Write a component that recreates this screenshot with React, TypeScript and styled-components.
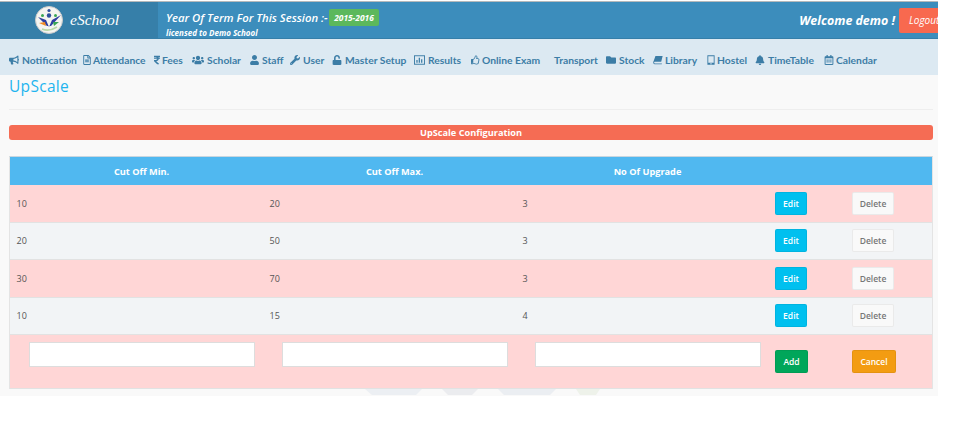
import React from 'react';
import styled, { createGlobalStyle } from 'styled-components';
import {
  FaBullhorn,
  FaRegFileAlt,
  FaRupeeSign,
  FaUsers,
  FaUser,
  FaWrench,
  FaUnlock,
  FaRegThumbsUp,
  FaFolder,
  FaBell,
  FaRegCalendarAlt,
} from 'react-icons/fa';

const GlobalStyle = createGlobalStyle`
  html, body {
    margin: 0;
    padding: 0;
    background: #ffffff;
    font-family: 'Open Sans', 'Liberation Sans', sans-serif;
  }
`;

const Page = styled.div`
  position: relative;
  width: 960px;
  height: 433px;
  overflow: hidden;
`;

const Frame = styled.div`
  width: 938px;
  overflow: hidden;
`;

const Header = styled.header`
  display: flex;
  height: 36px;
  margin-top: 1px;
  border-top: 1px solid #b5b9bb;
  border-bottom: 1px solid #367fa9;
  background: #3c8dbc;
  color: #ffffff;
`;

const Brand = styled.div`
  display: flex;
  align-items: center;
  width: 158px;
  padding-left: 35px;
  gap: 7px;
  box-sizing: border-box;
  background: #367fa9;
`;

const BrandName = styled.span`
  font-family: 'Liberation Serif', serif;
  font-style: italic;
  font-size: 15.5px;
`;

const Session = styled.div`
  flex: 1;
  padding: 7px 0 0 8px;
  font-style: italic;
  font-weight: 600;
`;

const SessionTitle = styled.div`
  display: flex;
  align-items: center;
  font-size: 11.3px;
  line-height: 17px;
`;

const YearBadge = styled.span`
  margin-left: 1px;
  padding: 0 5.5px;
  height: 17px;
  line-height: 18px;
  font-size: 8.4px;
  font-weight: 700;
  background: #5cb85c;
  border-radius: 2px;
`;

const Licence = styled.div`
  font-size: 8px;
  font-weight: 700;
  line-height: 11px;
  margin-top: 1px;
`;

const UserArea = styled.div`
  display: flex;
  align-items: center;
  height: 36px;
  margin-right: -12px;
`;

const Welcome = styled.span`
  font-size: 12.4px;
  font-style: italic;
  font-weight: 700;
  margin-right: 4px;
`;

const Logout = styled.span`
  display: block;
  width: 41px;
  height: 25px;
  padding-left: 10px;
  line-height: 25px;
  font-size: 10px;
  font-style: italic;
  background: #f8694f;
  border-radius: 2px;
`;

const Nav = styled.nav`
  display: flex;
  align-items: center;
  height: 36px;
  padding: 6px 0 0 9px;
  box-sizing: border-box;
  background: #dce9f2;
  color: #3c7da6;
  font-family: Lato, 'Liberation Sans', sans-serif;
  font-size: 10.3px;
  font-weight: 700;
  white-space: nowrap;
`;

const NavItem = styled.span<{ $width: number; $iconWidth: number; $gap: number }>`
  display: inline-flex;
  align-items: center;
  gap: ${(props) => props.$gap}px;
  width: ${(props) => props.$width}px;
  flex: none;

  svg {
    width: ${(props) => props.$iconWidth}px;
    height: 10px;
    flex: none;
  }
`;

const Content = styled.main`
  height: 321px;
  padding: 0 5px 0 9px;
  background: #f9f9f9;
`;

const Title = styled.h1`
  margin: 0;
  padding-top: 1px;
  height: 35px;
  box-sizing: border-box;
  border-bottom: 1px solid #eeeeee;
  font-size: 15.5px;
  font-weight: 400;
  line-height: 20px;
  letter-spacing: 0.3px;
  color: #1fb5ef;
`;

const ConfigBar = styled.div`
  height: 15px;
  margin: 15px 0 16px;
  line-height: 15px;
  text-align: center;
  font-size: 9.2px;
  font-weight: 700;
  color: #ffffff;
  background: #f56c54;
  border-radius: 3px;
`;

const Table = styled.div`
  border-top: 1px solid #c9d6df;
  border-left: 1px solid #e4e4e4;
  border-right: 1px solid #e4e4e4;
`;

const columns = '253px 253px 253px 77px 1fr';

const HeadRow = styled.div`
  display: grid;
  grid-template-columns: ${columns};
  height: 28px;
  background: #50b8f0;
  color: #ffffff;
  font-size: 9.2px;
  font-weight: 700;
`;

const HeadCell = styled.div`
  display: flex;
  align-items: center;
  justify-content: center;
  padding-left: 10px;
`;

const Row = styled.div<{ $odd: boolean; $tall?: boolean }>`
  display: grid;
  grid-template-columns: ${columns};
  height: ${(props) => (props.$tall ? 54 : 37.5)}px;
  box-sizing: border-box;
  align-items: center;
  background: ${(props) => (props.$odd ? '#ffd6d6' : '#f2f4f6')};
  border-bottom: 1px solid #e2e2e2;
  font-size: 9px;
  color: #555555;
`;

const Cell = styled.div`
  padding-left: 6.5px;
`;

const InputCell = styled.div`
  padding: 0 0 14px 19px;
`;

const TextBox = styled.input`
  display: block;
  width: 226px;
  height: 25px;
  box-sizing: border-box;
  border: 1px solid #dddddd;
  background: #ffffff;
  padding: 0;
`;

const ButtonCell = styled.div`
  padding-left: 6px;
`;

const Button = styled.button<{ $color: string; $text: string; $width: number }>`
  display: block;
  width: ${(props) => props.$width}px;
  height: 23px;
  padding: 0;
  font-family: inherit;
  font-size: 8.5px;
  font-weight: 600;
  color: ${(props) => props.$text};
  background: ${(props) => props.$color};
  border: 1px solid rgba(0, 0, 0, 0.06);
  border-radius: 2px;
`;

const Watermark = styled.svg`
  position: absolute;
  left: 360px;
  top: 389px;
`;

const ResultsIcon = () => (
  <svg viewBox="0 0 14 12">
    <rect x="0.6" y="0.6" width="12.8" height="10.8" fill="none" stroke="currentColor" strokeWidth="1.2" />
    <path d="M3 9.5V6h1.6v3.5zM6 9.5V3h1.6v6.5zM9 9.5V5h1.6v4.5z" fill="currentColor" />
  </svg>
);

const LibraryIcon = () => (
  <svg viewBox="0 0 14 12">
    <path d="M3.4 0.5H13.5L11.5 8.6H2.4Q1.4 8.6 1.6 10Q1.7 10.8 2.6 10.8H12.6L12.2 11.8H2.2Q0.3 11.8 0.3 9.4Q0.4 8 1.2 6.6Z" fill="currentColor" />
  </svg>
);

const HostelIcon = () => (
  <svg viewBox="0 0 10 14" preserveAspectRatio="none">
    <path fillRule="evenodd" d="M0.5 0.5H9.5V13.5H0.5ZM1.6 1.6V11H8.4V1.6ZM4.2 11.6V12.8H5.8V11.6Z" fill="currentColor" />
  </svg>
);

const navItems = [
  { icon: <FaBullhorn />, label: 'Notification', width: 74, iconWidth: 10, gap: 3 },
  { icon: <FaRegFileAlt />, label: 'Attendance', width: 71, iconWidth: 8, gap: 2 },
  { icon: <FaRupeeSign />, label: 'Fees', width: 38, iconWidth: 6, gap: 2 },
  { icon: <FaUsers />, label: 'Scholar', width: 58, iconWidth: 12, gap: 3 },
  { icon: <FaUser />, label: 'Staff', width: 40, iconWidth: 9, gap: 3 },
  { icon: <FaWrench />, label: 'User', width: 42, iconWidth: 10, gap: 3 },
  { icon: <FaUnlock />, label: 'Master Setup', width: 82, iconWidth: 10, gap: 3 },
  { icon: <ResultsIcon />, label: 'Results', width: 57, iconWidth: 11, gap: 3 },
  { icon: <FaRegThumbsUp />, label: 'Online Exam', width: 83, iconWidth: 9, gap: 2 },
  { icon: null, label: 'Transport', width: 52, iconWidth: 0, gap: 0 },
  { icon: <FaFolder />, label: 'Stock', width: 47, iconWidth: 10, gap: 3 },
  { icon: <LibraryIcon />, label: 'Library', width: 54, iconWidth: 10, gap: 2 },
  { icon: <HostelIcon />, label: 'Hostel', width: 48, iconWidth: 8, gap: 2 },
  { icon: <FaBell />, label: 'TimeTable', width: 69, iconWidth: 10, gap: 3 },
  { icon: <FaRegCalendarAlt />, label: 'Calendar', width: 60, iconWidth: 10, gap: 2 },
];

const rows = [
  ['10', '20', '3'],
  ['20', '50', '3'],
  ['30', '70', '3'],
  ['10', '15', '4'],
];

const Logo = () => (
  <svg width="28" height="28" viewBox="0 0 28 28">
    <circle cx="14" cy="14" r="13.5" fill="#f4f4f0" stroke="#c9c9c9" />
    <circle cx="14" cy="4.5" r="1.6" fill="#2d4f9e" />
    <circle cx="14" cy="9.5" r="2.2" fill="#2d4f9e" />
    <circle cx="7.5" cy="9.5" r="1.5" fill="#3aa655" />
    <circle cx="20.5" cy="9.5" r="1.5" fill="#3aa655" />
    <path d="M3 11 L11 14 L14 21 L17 14 L26 9 L16 20 L12 20 Z" fill="#2d3fa0" />
    <path d="M4 17 L10 16 L11 20 Z" fill="#f08a24" />
    <path d="M18 16 L24 16 L19 20 Z" fill="#3aa655" />
    <path d="M7 23 Q14 26 22 21" fill="none" stroke="#b8d8a8" strokeWidth="1.5" />
  </svg>
);

const App = () => (
  <Page>
    <GlobalStyle />
    <Frame>
      <Header>
        <Brand>
          <Logo />
          <BrandName>eSchool</BrandName>
        </Brand>
        <Session>
          <SessionTitle>
            Year Of Term For This Session :-
            <YearBadge>2015-2016</YearBadge>
          </SessionTitle>
          <Licence>licensed to Demo School</Licence>
        </Session>
        <UserArea>
          <Welcome>Welcome demo !</Welcome>
          <Logout>Logout</Logout>
        </UserArea>
      </Header>
      <Nav>
        {navItems.map((item) => (
          <NavItem key={item.label} $width={item.width} $iconWidth={item.iconWidth} $gap={item.gap}>
            {item.icon}
            {item.label}
          </NavItem>
        ))}
      </Nav>
      <Content>
        <Title>UpScale</Title>
        <ConfigBar>UpScale Configuration</ConfigBar>
        <Table>
          <HeadRow>
            <HeadCell>Cut Off Min.</HeadCell>
            <HeadCell>Cut Off Max.</HeadCell>
            <HeadCell>No Of Upgrade</HeadCell>
          </HeadRow>
          {rows.map((row, index) => (
            <Row key={index} $odd={index % 2 === 0}>
              {row.map((value, cellIndex) => (
                <Cell key={cellIndex}>{value}</Cell>
              ))}
              <ButtonCell>
                <Button $color="#00c0ef" $text="#ffffff" $width={32}>
                  Edit
                </Button>
              </ButtonCell>
              <ButtonCell>
                <Button $color="#f9f9f9" $text="#777777" $width={42}>
                  Delete
                </Button>
              </ButtonCell>
            </Row>
          ))}
          <Row $odd $tall>
            <InputCell>
              <TextBox />
            </InputCell>
            <InputCell>
              <TextBox />
            </InputCell>
            <InputCell>
              <TextBox />
            </InputCell>
            <ButtonCell>
              <Button $color="#00a65a" $text="#ffffff" $width={33}>
                Add
              </Button>
            </ButtonCell>
            <ButtonCell>
              <Button $color="#f39c12" $text="#ffffff" $width={44}>
                Cancel
              </Button>
            </ButtonCell>
          </Row>
        </Table>
      </Content>
    </Frame>
    <Watermark width="245" height="6" viewBox="0 0 245 6">
      <path d="M5 0 H62 L56 6 H12 Z" fill="#eceff3" />
      <path d="M82 0 H118 L112 6 H88 Z" fill="#ebecef" />
      <path d="M138 0 H196 L190 6 H144 Z" fill="#ebeef2" />
      <path d="M216 0 H240 L236 6 H220 Z" fill="#eef2ea" />
    </Watermark>
  </Page>
);

export default App;
